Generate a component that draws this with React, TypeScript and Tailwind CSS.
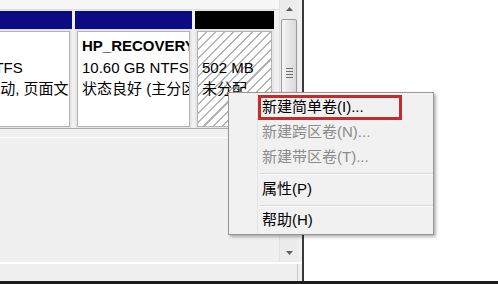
import React from 'react';

type PartProps = {
  width: string;
  head: string;
  hatch?: boolean;
  lines: React.ReactNode[];
};

const Part = ({ width, head, hatch, lines }: PartProps) => {
  return (
    <div className={`${width} shrink-0 flex flex-col pt-[1px] bg-[#e6e6e6]`}>
      <div className={`h-[18px] ${head}`}></div>
      <div className="px-[2px] pt-[2px]">
        <div
          className={
            hatch
              ? 'h-[96px] border border-[#b4b4b4] pl-[4px] pt-[3px] leading-[21.5px] overflow-hidden whitespace-nowrap bg-[repeating-linear-gradient(135deg,#ffffff_0px,#ffffff_5px,#b4b4b4_5px,#b4b4b4_6.5px)]'
              : 'h-[96px] border border-[#b4b4b4] pl-[4px] pt-[3px] leading-[21.5px] overflow-hidden whitespace-nowrap bg-white'
          }
        >
          {lines.map((l, i) => (
            <div key={i} className="h-[21.5px]">
              {l}
            </div>
          ))}
        </div>
      </div>
    </div>
  );
};

const Arrow = ({ down }: { down?: boolean }) => (
  <svg width="7" height="4" viewBox="0 0 7 4">
    <path d={down ? 'M0 0 L7 0 L3.5 4 Z' : 'M0 4 L7 4 L3.5 0 Z'} fill="#5f5f5f" />
  </svg>
);

const MenuItem = ({ children, disabled }: { children: React.ReactNode; disabled?: boolean }) => (
  <div className={`h-[25px] flex items-center pl-[4px] ${disabled ? 'text-[#8c8c8c]' : 'text-black'}`}>{children}</div>
);

const Separator = ({ h }: { h: string }) => (
  <div className={`${h} pt-[3px] pl-[2px]`}>
    <div className="h-[1px] bg-[#d7d7d7]"></div>
    <div className="h-[1px] bg-white"></div>
  </div>
);

export default function App() {
  return (
    <div className="relative w-[498px] h-[284px] overflow-hidden bg-white flex flex-col font-['Liberation_Sans','Noto_Sans_CJK_SC',sans-serif] text-[15px] text-black">
      <div className="flex h-[281px] shrink-0">
        {/* Disk graphic pane */}
        <div className="w-[302px] shrink-0 bg-[#f0f0f0] flex flex-col">
          <div className="flex h-[262px] shrink-0">
            <div className="w-[279px] shrink-0 flex flex-col overflow-hidden">
              <div className="h-[10px] shrink-0 bg-[#f7f7f7] border-b border-[#dedede]"></div>
              <div className="flex -ml-[91px] h-[119px] shrink-0 gap-[3px] bg-[#f0f0f0] border-b border-[#a9a9a9]">
                <Part
                  width="w-[163px]"
                  head="bg-[#0b0b84]"
                  lines={['(C:)', '97.66 GB NTFS', '状态良好 (启动, 页面文件, 故障转储, 主分区)']}
                />
                <Part
                  width="w-[117px]"
                  head="bg-[#0b0b84]"
                  lines={[<span className="font-bold">HP_RECOVERY</span>, '10.60 GB NTFS', '状态良好 (主分区)']}
                />
                <Part width="w-[79px]" head="bg-black" hatch lines={['', '502 MB', '未分配']} />
              </div>
              <div className="h-[8px] shrink-0"></div>
              <div className="h-[1px] shrink-0 bg-white"></div>
              <div className="flex-1"></div>
            </div>
            {/* Scrollbar */}
            <div className="w-[19px] shrink-0 flex flex-col bg-[#ececec] border-l border-[#e2e2e2]">
              <div className="h-[17px] shrink-0 flex items-center justify-center">
                <Arrow />
              </div>
              <div className="flex-1 px-[1px] pt-[2px]">
                <div className="h-[110px] rounded-[2px] border border-[#9c9c9c] bg-gradient-to-r from-[#f6f6f6] to-[#d9d9d9] flex flex-col items-center justify-center gap-[2px] pb-[2px]">
                  <div className="w-[7px] h-[1px] bg-[#707070]"></div>
                  <div className="w-[7px] h-[1px] bg-[#707070]"></div>
                  <div className="w-[7px] h-[1px] bg-[#707070]"></div>
                  <div className="w-[7px] h-[1px] bg-[#707070]"></div>
                </div>
              </div>
              <div className="h-[18px] shrink-0 flex items-center justify-center">
                <Arrow down />
              </div>
            </div>
          </div>
          <div className="h-[2px] shrink-0 bg-white"></div>
          <div className="flex-1 flex">
            <div className="w-[298px] border-r border-[#c8c8c8]"></div>
          </div>
        </div>
        <div className="w-[2px] shrink-0 bg-[#3a3a3a]"></div>
        <div className="flex-1 bg-white"></div>
      </div>
      <div className="flex-1 bg-[#1c1c1c]"></div>

      {/* Context menu */}
      <div className="absolute left-[228px] top-[92px] w-[206px] h-[143px] bg-[#f1f1f1] border border-[#979797] shadow-[2px_2px_3px_rgba(0,0,0,0.3)] flex">
        <div className="w-[29px] shrink-0 border-r border-[#e2e3e3]"></div>
        <div className="flex-1 flex flex-col pt-[2px]">
          <div className="w-[144px] h-[25px] border-[3px] border-[#c62a2a] flex items-center pl-[1px]">新建简单卷(I)...</div>
          <MenuItem disabled>新建跨区卷(N)...</MenuItem>
          <MenuItem disabled>新建带区卷(T)...</MenuItem>
          <Separator h="h-[7px]" />
          <MenuItem>属性(P)</MenuItem>
          <Separator h="h-[6px]" />
          <MenuItem>帮助(H)</MenuItem>
        </div>
      </div>
    </div>
  );
}
